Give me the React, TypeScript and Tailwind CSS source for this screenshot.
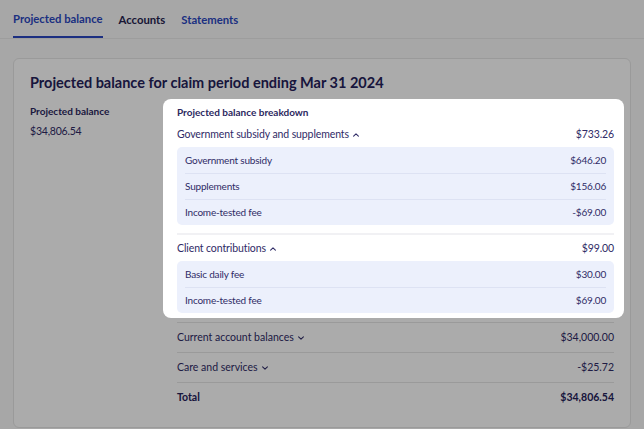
import React from "react";

type Line = { label: string; amount: string };

const subsidy: Line[] = [
  { label: "Government subsidy", amount: "$646.20" },
  { label: "Supplements", amount: "$156.06" },
  { label: "Income-tested fee", amount: "-$69.00" },
];

const client: Line[] = [
  { label: "Basic daily fee", amount: "$30.00" },
  { label: "Income-tested fee", amount: "$69.00" },
];

const Chevron = ({ up }: { up?: boolean }) => (
  <svg
    width="8"
    height="8"
    viewBox="0 0 8 8"
    className={`ml-[3px] ${up ? "" : "rotate-180"}`}
    fill="none"
    stroke="currentColor"
    strokeWidth="1.1"
    strokeLinecap="round"
    strokeLinejoin="round"
  >
    <path d="M1.6 5.1 4 2.9l2.4 2.2" />
  </svg>
);

const SubRows = ({ rows }: { rows: Line[] }) => (
  <div className="rounded-[5px] bg-[#ecf0fc] px-2">
    {rows.map((r, i) => (
      <div
        key={r.label}
        className={`flex h-[26px] items-center justify-between text-[10px] tracking-[-0.02em] text-[#2f2b66] ${
          i > 0 ? "border-t border-[#dde2f3]" : ""
        }`}
      >
        <span>{r.label}</span>
        <span>{r.amount}</span>
      </div>
    ))}
  </div>
);

const Group = ({ title, amount, rows }: { title: string; amount: string; rows: Line[] }) => (
  <div>
    <div className="flex h-[25px] items-center justify-between text-[10.5px] tracking-[-0.01em] text-[#2f2b66]">
      <span className="flex items-center">
        {title}
        <Chevron up />
      </span>
      <span>{amount}</span>
    </div>
    <SubRows rows={rows} />
  </div>
);

export default function App() {
  return (
    <div
      className="relative min-h-[429px] overflow-hidden bg-[#fafafa]"
      style={{ fontFamily: "Lato, 'Noto Sans', sans-serif" }}
    >
      <nav className="flex h-[39px] gap-4 border-b border-[#eaeaea] px-[13px] text-[11.3px] font-bold">
        <div className="flex items-center border-b-2 border-[#2b47c0] pt-[2px] text-[#2b47c0]">
          Projected balance
        </div>
        <div className="flex items-center pt-[2px] text-[#26234f]">Accounts</div>
        <div className="flex items-center pt-[2px] text-[#2b47c0]">Statements</div>
      </nav>

      <section className="mx-[13px] mt-[19px] rounded-[6px] border border-[#e6e6e6] bg-white px-4 pt-[14px] pb-[14px]">
        <h1 className="text-[14.5px] font-bold leading-5 text-[#25215a]">
          Projected balance for claim period ending Mar 31 2024
        </h1>

        <div className="mt-[6px] grid grid-cols-[147px_1fr]">
          <div className="pt-[5px]">
            <div className="text-[10px] font-bold leading-[14px] text-[#2c2860]">
              Projected balance
            </div>
            <div className="mt-[6px] text-[10.5px] tracking-[-0.02em] text-[#2f2b66]">$34,806.54</div>
          </div>

          <div>
            <div className="relative z-20 -mr-[10px] -ml-[14px] rounded-[8px] bg-white pt-[6px] pr-[10px] pb-[5px] pl-[14px]">
              <div className="text-[10px] font-bold leading-[14px] text-[#2c2860]">
                Projected balance breakdown
              </div>
              <div className="mt-[3px]">
                <Group title="Government subsidy and supplements" amount="$733.26" rows={subsidy} />
              </div>
              <div className="mt-[8px] border-t-2 border-[#f1f1f4] pt-[1px]">
                <Group title="Client contributions" amount="$99.00" rows={client} />
              </div>
            </div>

            <div className="mt-[4px] border-t border-[#e6e6e6]">
              <div className="flex h-[30px] items-center justify-between border-b border-[#e6e6e6] text-[10.5px] text-[#2f2b66]">
                <span className="flex items-center">
                  Current account balances
                  <Chevron />
                </span>
                <span>$34,000.00</span>
              </div>
              <div className="flex h-[30px] items-center justify-between border-b border-[#e6e6e6] text-[10.5px] text-[#2f2b66]">
                <span className="flex items-center">
                  Care and services
                  <Chevron />
                </span>
                <span>-$25.72</span>
              </div>
              <div className="flex h-[30px] items-center justify-between text-[10.5px] font-bold text-[#25215a]">
                <span>Total</span>
                <span>$34,806.54</span>
              </div>
            </div>
          </div>
        </div>
      </section>

      <div className="pointer-events-none absolute inset-0 z-10 bg-black/[0.33]" />
    </div>
  );
}
